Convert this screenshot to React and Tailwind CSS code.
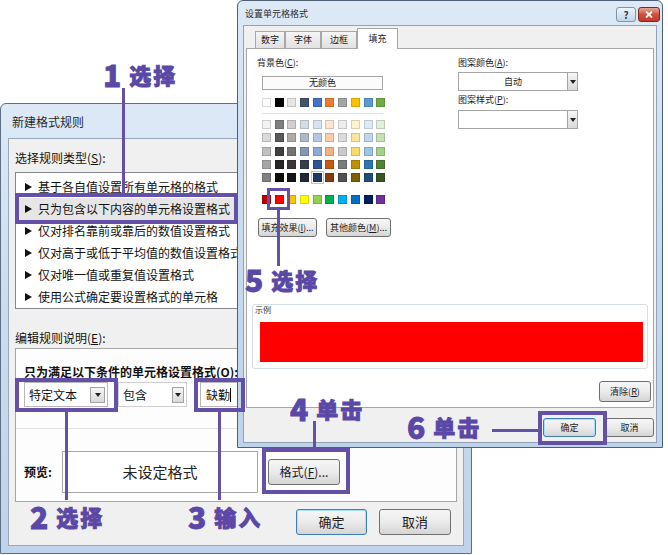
import React from "react";

const ROW1 = [
  "bg-[#ffffff]", "bg-[#000000]", "bg-[#e7e6e6]", "bg-[#44546a]", "bg-[#4472c4]",
  "bg-[#ed7d31]", "bg-[#a5a5a5]", "bg-[#ffc000]", "bg-[#5b9bd5]", "bg-[#70ad47]",
];

const TINTS = [
  ["bg-[#f2f2f2]", "bg-[#7f7f7f]", "bg-[#d0cece]", "bg-[#d6dce4]", "bg-[#d9e2f3]", "bg-[#fbe5d5]", "bg-[#ededed]", "bg-[#fff2cc]", "bg-[#deebf6]", "bg-[#e2efd9]"],
  ["bg-[#d9d9d9]", "bg-[#595959]", "bg-[#aeaaaa]", "bg-[#adb9ca]", "bg-[#b4c6e7]", "bg-[#f7cbac]", "bg-[#dbdbdb]", "bg-[#fee599]", "bg-[#bdd7ee]", "bg-[#c5e0b3]"],
  ["bg-[#bfbfbf]", "bg-[#404040]", "bg-[#757171]", "bg-[#8497b0]", "bg-[#8eaadb]", "bg-[#f4b183]", "bg-[#c9c9c9]", "bg-[#ffd965]", "bg-[#9dc3e6]", "bg-[#a8d08d]"],
  ["bg-[#a6a6a6]", "bg-[#262626]", "bg-[#3a3838]", "bg-[#333f4f]", "bg-[#2f5496]", "bg-[#c55a11]", "bg-[#7b7b7b]", "bg-[#bf9000]", "bg-[#2e75b5]", "bg-[#538135]"],
  ["bg-[#808080]", "bg-[#0d0d0d]", "bg-[#171616]", "bg-[#222a35]", "bg-[#1f3864]", "bg-[#833c0b]", "bg-[#525252]", "bg-[#7f6000]", "bg-[#1e4e79]", "bg-[#375623]"],
];

const STD = [
  "bg-[#c00000]", "bg-[#ff0000]", "bg-[#ffc000]", "bg-[#ffff00]", "bg-[#92d050]",
  "bg-[#00b050]", "bg-[#00b0f0]", "bg-[#0070c0]", "bg-[#002060]", "bg-[#7030a0]",
];

const RULES = [
  "基于各自值设置所有单元格的格式",
  "只为包含以下内容的单元格设置格式",
  "仅对排名靠前或靠后的数值设置格式",
  "仅对高于或低于平均值的数值设置格式",
  "仅对唯一值或重复值设置格式",
  "使用公式确定要设置格式的单元格",
];

function Tri() {
  return (
    <svg width="7" height="8" viewBox="0 0 7 8" className="shrink-0">
      <path d="M0 0L7 4L0 8Z" fill="#111" />
    </svg>
  );
}

function DropArrow({ className = "" }) {
  return (
    <div className={"flex items-center justify-center border border-[#a3a3a3] bg-gradient-to-b from-[#f6f6f6] to-[#d9d9d9] " + className}>
      <svg width="6" height="4" viewBox="0 0 6 4">
        <path d="M0 0H6L3 4Z" fill="#222" />
      </svg>
    </div>
  );
}

function WinBtn({ children, className = "", focus = false }) {
  return (
    <div
      className={`flex items-center justify-center rounded-[3px] border bg-gradient-to-b from-[#f6f6f6] via-[#ebebeb] to-[#d5d5d5] text-[#1a1a1a] ${
        focus ? "border-[#3c7fb1] shadow-[inset_0_0_0_1px_#a6e4f7]" : "border-[#707070]"
      } ${className}`}
    >
      {children}
    </div>
  );
}

function Swatch({ color, selected = false, hover = false }) {
  return (
    <div
      className={`w-[9px] h-[9px] shrink-0 border border-black/15 ${color} ${
        selected ? "outline outline-1 outline-white" : ""
      } ${hover ? "outline outline-1 outline-offset-1 outline-[#a9c6e4]" : ""}`}
    />
  );
}

function Note({ n, text, className }) {
  return (
    <div className={"absolute flex items-center gap-[8px] text-[#5a47a6] font-black leading-none whitespace-nowrap [-webkit-text-stroke:0.8px_#5a47a6] " + className}>
      <span className="text-[30px]">{n}</span>
      <span className="text-[22px] tracking-[2px]">{text}</span>
    </div>
  );
}

function NewRuleDialog() {
  return (
    <div className="absolute left-0 top-[103px] w-[472px] h-[451px] flex flex-col border border-[#5d6f85] rounded-t-[6px] bg-gradient-to-b from-[#dde9f6] via-[#c9dbee] to-[#bfd3ea]">
      <div className="h-[34px] flex items-center pl-[11px] pt-[2px] text-[12px] text-[#2a2a2a]">新建格式规则</div>
      <div className="mx-[7px] h-[408px] bg-[#f0f0f0] border border-[#97a8bb] flex flex-col px-[6px] text-[12px] text-[#111]">
        <div className="mt-[11px] h-[16px] leading-[16px]">
          选择规则类型(<u>S</u>):
        </div>
        <div className="mt-[6px] h-[137px] border border-[#828790] bg-white pt-[3px] overflow-hidden">
          {RULES.map((r, i) => (
            <div key={r} className={`h-[22px] flex items-center pl-[9px] gap-[6px] whitespace-nowrap ${i === 1 ? "bg-[#e6e6e6]" : ""}`}>
              <Tri />
              <span>{r}</span>
            </div>
          ))}
        </div>
        <div className="mt-[21px] h-[16px] leading-[16px]">
          编辑规则说明(<u>E</u>):
        </div>
        <div className="mt-[2px] h-[154px] border border-[#a6a6a6] bg-[#fdfdfd] flex flex-col">
          <div className="pt-[15px] pl-[8px] h-[31px] leading-[16px] font-bold whitespace-nowrap">
            只为满足以下条件的单元格设置格式(<u>O</u>):
          </div>
          <div className="mt-[2px] h-[25px] flex pl-[8px]">
            <div className="w-[84px] h-full border border-[#b8b8b8] bg-white flex items-center justify-between pl-[4px] pr-[2px]">
              <span>特定文本</span>
              <DropArrow className="w-[15px] h-[16px]" />
            </div>
            <div className="ml-[10px] w-[69px] h-full border border-[#cfcfcf] bg-white flex items-center justify-between pl-[4px] pr-[2px]">
              <span>包含</span>
              <DropArrow className="w-[12px] h-[16px]" />
            </div>
            <div className="ml-[13px] w-[90px] h-full border border-[#b8b8b8] bg-white flex items-center pl-[5px]">
              <span>缺勤</span>
              <span className="w-px h-[14px] bg-black" />
            </div>
          </div>
          <div className="mt-[21px] border-t border-[#dfe3e8]" />
          <div className="mt-[22px] flex items-center pl-[8px]">
            <span className="w-[38px] font-bold">预览:</span>
            <div className="w-[196px] h-[42px] border border-[#a6a6a6] bg-white flex items-center justify-center text-[15px] text-[#222]">
              未设定格式
            </div>
            <WinBtn className="ml-[10px] w-[72px] h-[26px] text-[12px]">
              格式(<u>F</u>)...
            </WinBtn>
          </div>
        </div>
        <div className="mt-[7px] flex justify-end gap-[12px] pr-[6px]">
          <WinBtn focus className="w-[71px] h-[26px] text-[13px]">确定</WinBtn>
          <WinBtn className="w-[72px] h-[26px] text-[13px]">取消</WinBtn>
        </div>
      </div>
    </div>
  );
}

function FormatCellsDialog() {
  const tabs = [
    { t: "数字", w: "w-[30px]" },
    { t: "字体", w: "w-[36px]" },
    { t: "边框", w: "w-[36px]" },
  ];
  return (
    <div className="absolute left-[237px] top-0 w-[426px] h-[448px] flex flex-col border border-[#4e5f73] rounded-t-[6px] bg-gradient-to-b from-[#dde9f6] via-[#c9dbee] to-[#bfd3ea] text-[9px] text-[#1a1a1a]">
      <div className="h-[24px] flex items-center justify-between pl-[7px] pr-[2px] pt-[2px]">
        <span className="text-[#2a2a2a]">设置单元格格式</span>
        <div className="flex gap-[2px]">
          <div className="w-[20px] h-[15px] rounded-[3px] border border-[#7f93ab] bg-gradient-to-b from-[#eef4fb] to-[#c4d5e9] flex items-center justify-center text-[10px] font-bold text-[#2b3b52]">?</div>
          <div className="w-[22px] h-[15px] rounded-[3px] border border-[#7a2a22] bg-gradient-to-b from-[#e8a395] via-[#d0503d] to-[#c23a27] flex items-center justify-center">
            <svg width="8" height="7" viewBox="0 0 8 7">
              <path d="M1 0.5L7 6.5M7 0.5L1 6.5" stroke="#fff" strokeWidth="1.8" />
            </svg>
          </div>
        </div>
      </div>
      <div className="mx-[5px] mb-[4px] flex-1 bg-[#f0f0f0] border border-[#8fa2b7] px-[2px] flex flex-col">
        <div className="pt-[2px] ml-[9px] h-[22px] flex items-end">
          {tabs.map((x) => (
            <div key={x.t} className={`${x.w} h-[17px] border border-b-0 border-[#a7a7a7] bg-gradient-to-b from-[#f5f5f5] to-[#e1e1e1] flex items-center justify-center`}>
              {x.t}
            </div>
          ))}
          <div className="w-[41px] h-[21px] -mb-px relative border border-b-0 border-[#a7a7a7] bg-white flex items-center justify-center">填充</div>
        </div>
        <div className="h-[360px] border border-[#a7a7a7] bg-white flex flex-col">
          <div className="flex">
            <div className="w-[211px] pl-[10px] pt-[7px] flex flex-col">
              <div className="h-[14px] leading-[14px]">
                背景色(<u>C</u>):
              </div>
              <div className="mt-[6px] ml-[5px] w-[121px] h-[14px] border border-[#a5a5a5] bg-[#fbfbfb] flex items-center justify-center">
                无颜色
              </div>
              <div className="mt-[8px] ml-[5px] flex gap-[3.7px]">
                {ROW1.map((c, i) => (
                  <Swatch key={i} color={c} />
                ))}
              </div>
              <div className="mt-[6px] ml-[5px] w-[121px] h-px bg-[#e3e3e3]" />
              <div className="mt-[6px] ml-[5px] flex flex-col gap-[4.33px]">
                {TINTS.map((row, r) => (
                  <div key={r} className="flex gap-[3.7px]">
                    {row.map((c, i) => (
                      <Swatch key={i} color={c} hover={r === 4 && i === 4} />
                    ))}
                  </div>
                ))}
              </div>
              <div className="mt-[13px] ml-[5px] flex gap-[3.7px]">
                {STD.map((c, i) => (
                  <Swatch key={i} color={c} selected={i === 1} />
                ))}
              </div>
              <div className="mt-[14px] ml-[1px] flex gap-[9px]">
                <WinBtn className="w-[59px] h-[19px] text-[9px]">
                  填充效果(<u>I</u>)...
                </WinBtn>
                <WinBtn className="w-[65px] h-[19px] text-[9px]">
                  其他颜色(<u>M</u>)...
                </WinBtn>
              </div>
            </div>
            <div className="pt-[7px] flex flex-col">
              <div className="h-[14px] leading-[14px]">
                图案颜色(<u>A</u>):
              </div>
              <div className="mt-[2px] w-[120px] h-[19px] border border-[#a5a5a5] bg-white flex">
                <div className="flex-1 flex items-center justify-center">自动</div>
                <DropArrow className="w-[10px] h-full border-y-0 border-r-0" />
              </div>
              <div className="mt-[2px] h-[14px] leading-[14px]">
                图案样式(<u>P</u>):
              </div>
              <div className="mt-[3px] w-[120px] h-[19px] border border-[#a5a5a5] bg-white flex">
                <div className="flex-1" />
                <DropArrow className="w-[10px] h-full border-y-0 border-r-0" />
              </div>
            </div>
          </div>
          <div className="mt-[67px] ml-[5px] w-[396px] h-[65px] border border-[#d5dfe5] rounded-[3px] flex flex-col">
            <div className="pl-[2px] h-[10px] leading-[10px] text-[8px] text-[#333]">示例</div>
            <div className="mt-[7px] ml-[7px] w-[383px] h-[40px] bg-[#ff0000]" />
          </div>
          <div className="mt-[12px] self-end mr-[2px]">
            <WinBtn className="w-[52px] h-[21px] text-[9px]">
              清除(<u>R</u>)
            </WinBtn>
          </div>
        </div>
        <div className="mt-[10px] flex justify-end gap-[9px]">
          <WinBtn focus className="w-[53px] h-[19px] text-[9px]">确定</WinBtn>
          <WinBtn className="w-[49px] h-[19px] text-[9px]">取消</WinBtn>
        </div>
      </div>
    </div>
  );
}

export default function App() {
  return (
    <div className="relative w-[668px] h-[555px] overflow-hidden bg-white font-['Noto_Sans_CJK_SC',sans-serif]">
      <NewRuleDialog />
      <FormatCellsDialog />

      {/* callouts */}
      <div className="absolute left-[15px] top-[193px] w-[223px] h-[31px] border-4 border-[#6550a8]" />
      <div className="absolute left-[15px] top-[378px] w-[103px] h-[34px] border-4 border-[#6550a8]" />
      <div className="absolute left-[194px] top-[378px] w-[51px] h-[34px] border-4 border-[#6550a8]" />
      <div className="absolute left-[262px] top-[448px] w-[88px] h-[46px] border-4 border-[#6550a8]" />
      <div className="absolute left-[267px] top-[188px] w-[23px] h-[22px] border-[3px] border-[#6550a8]" />
      <div className="absolute left-[538px] top-[411px] w-[69px] h-[34px] border-4 border-[#6550a8]" />

      <div className="absolute left-[122px] top-[88px] w-[3px] h-[105px] bg-[#6550a8]" />
      <div className="absolute left-[65px] top-[411px] w-[3px] h-[89px] bg-[#6550a8]" />
      <div className="absolute left-[218px] top-[411px] w-[3px] h-[89px] bg-[#6550a8]" />
      <div className="absolute left-[313px] top-[421px] w-[3px] h-[27px] bg-[#6550a8]" />
      <div className="absolute left-[277px] top-[210px] w-[3px] h-[56px] bg-[#6550a8]" />
      <div className="absolute left-[492px] top-[429px] w-[46px] h-[3px] bg-[#6550a8]" />

      <Note n="1" text="选择" className="left-[103px] top-[59px]" />
      <Note n="2" text="选择" className="left-[30px] top-[501px]" />
      <Note n="3" text="输入" className="left-[188px] top-[501px]" />
      <Note n="4" text="单击" className="left-[290px] top-[393px]" />
      <Note n="5" text="选择" className="left-[245px] top-[264px]" />
      <Note n="6" text="单击" className="left-[407px] top-[411px]" />
    </div>
  );
}
